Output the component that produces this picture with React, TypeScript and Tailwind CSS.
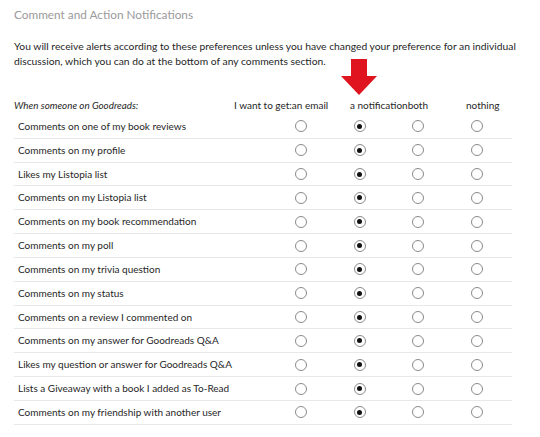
import React from 'react';

const rows: string[] = [
  'Comments on one of my book reviews',
  'Comments on my profile',
  'Likes my Listopia list',
  'Comments on my Listopia list',
  'Comments on my book recommendation',
  'Comments on my poll',
  'Comments on my trivia question',
  'Comments on my status',
  'Comments on a review I commented on',
  'Comments on my answer for Goodreads Q&A',
  'Likes my question or answer for Goodreads Q&A',
  'Lists a Giveaway with a book I added as To-Read',
  'Comments on my friendship with another user',
];

const Radio: React.FC<{ checked?: boolean }> = ({ checked }) => (
  <div className="flex w-[58.5px] justify-center">
    <span className="flex h-[12px] w-[12px] items-center justify-center rounded-full border border-[#8a8a8a] bg-white">
      {checked && <span className="h-[5px] w-[5px] rounded-full bg-[#111]" />}
    </span>
  </div>
);

const App: React.FC = () => {
  return (
    <div className="relative h-[437px] w-[540px] overflow-hidden bg-white px-[14px] font-['Lato',sans-serif] text-[#262626]">
      <h2 className="pt-[6px] text-[11.8px] leading-[17px] text-[#9a9a9a]">Comment and Action Notifications</h2>

      <p className="mt-[16px] text-[10.3px] leading-[15px]">
        You will receive alerts according to these preferences unless you have changed your preference for an individual
        discussion, which you can do at the bottom of any comments section.
      </p>

      {/* red arrow pointing at the notification column */}
      <svg className="absolute left-[340px] top-[59px]" width="38" height="37" viewBox="0 0 38 37">
        <polygon points="11,0 27,0 27,17 37,17 19,36 1,17 11,17" fill="#e0141e" />
      </svg>

      <div className="mt-[29px] flex text-[10px] leading-[15px]">
        <div className="w-[220px] text-[9.8px] italic">When someone on Goodreads:</div>
        <div className="w-[116px]">I want to get:an email</div>
        <div className="w-[116px]">a notificationboth</div>
        <div>nothing</div>
      </div>

      <div className="mt-[2px] w-[498px]">
        {rows.map((label) => (
          <div key={label} className="flex h-[23.83px] items-center border-b border-[#e8e8e8]">
            <div className="w-[258px] pl-[4px] text-[10px]">{label}</div>
            <Radio />
            <Radio checked />
            <Radio />
            <Radio />
          </div>
        ))}
      </div>
    </div>
  );
};

export default App;
